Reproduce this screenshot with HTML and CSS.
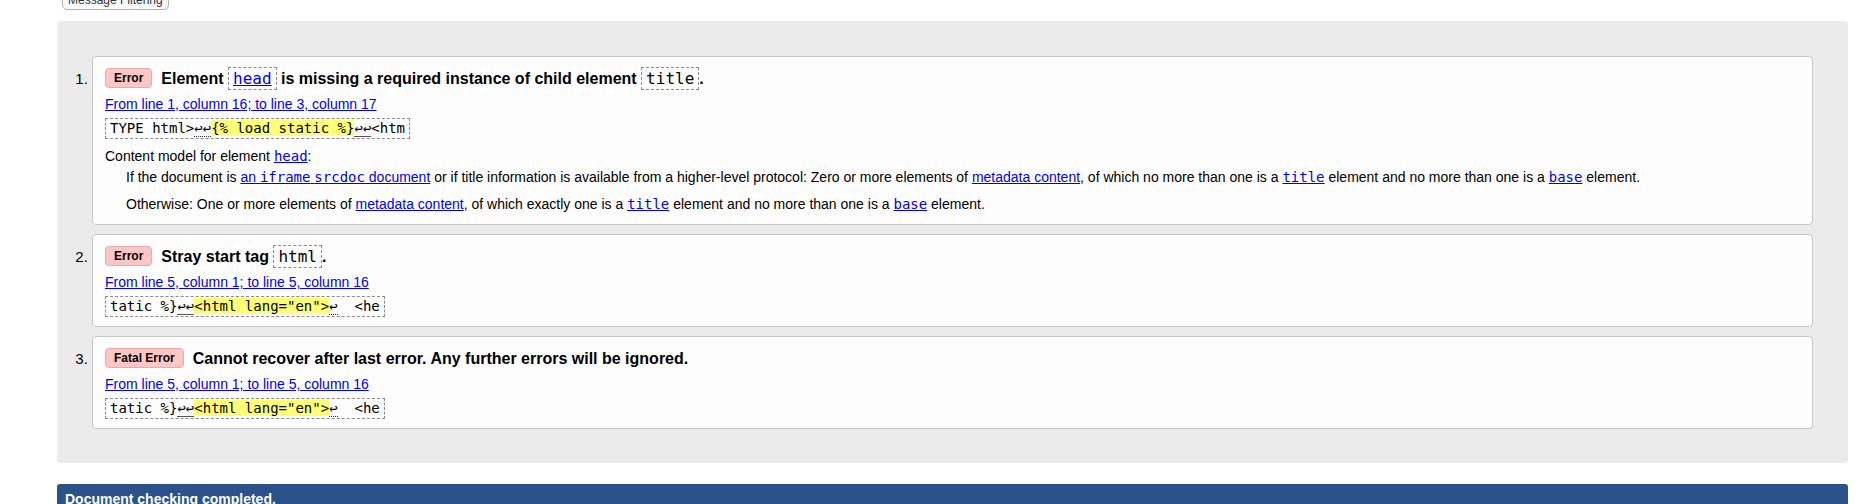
FILE: index.html
```html
<!DOCTYPE html>
<html lang="en">
<head>
<meta charset="utf-8">
<title>Validator results</title>
<link rel="stylesheet" href="styles.css">
</head>
<body>
<div class="page">
  <div class="filters">
    <button class="filter-btn" type="button">Message Filtering</button>
  </div>
  <div class="results">
    <ol class="messages">
      <li class="msg">
        <p class="title"><span class="badge">Error</span>Element <code class="ic"><a href="#">head</a></code> is missing a required instance of child element <code class="ic">title</code>.</p>
        <p class="loc"><a href="#">From line 1, column 16; to line 3, column 17</a></p>
        <p class="extract"><code class="ex">TYPE html&gt;<span class="lf dot">↩↩</span><mark>{% load static %}</mark><span class="lf sol">↩↩</span>&lt;htm</code></p>
        <p class="model">Content model for element <a href="#"><code>head</code></a>:</p>
        <p class="model-item">If the document is <a href="#">an <code>iframe</code> <code>srcdoc</code> document</a> or if title information is available from a higher-level protocol: Zero or more elements of <a href="#">metadata content</a>, of which no more than one is a <a href="#"><code>title</code></a> element and no more than one is a <a href="#"><code>base</code></a> element.</p>
        <p class="model-item second">Otherwise: One or more elements of <a href="#">metadata content</a>, of which exactly one is a <a href="#"><code>title</code></a> element and no more than one is a <a href="#"><code>base</code></a> element.</p>
      </li>
      <li class="msg">
        <p class="title"><span class="badge">Error</span>Stray start tag <code class="ic">html</code>.</p>
        <p class="loc"><a href="#">From line 5, column 1; to line 5, column 16</a></p>
        <p class="extract"><code class="ex">tatic %}<span class="lf sol">↩↩</span><mark>&lt;html lang="en"&gt;</mark><span class="lf dot">↩</span>  &lt;he</code></p>
      </li>
      <li class="msg">
        <p class="title"><span class="badge">Fatal Error</span>Cannot recover after last error. Any further errors will be ignored.</p>
        <p class="loc"><a href="#">From line 5, column 1; to line 5, column 16</a></p>
        <p class="extract"><code class="ex">tatic %}<span class="lf sol">↩↩</span><mark>&lt;html lang="en"&gt;</mark><span class="lf dot">↩</span>  &lt;he</code></p>
      </li>
    </ol>
  </div>
  <p class="success">Document checking completed.</p>
</div>
</body>
</html>
```
FILE: styles.css
```css
html, body {
  margin: 0;
  padding: 0;
  background: #ffffff;
}

body {
  font-family: "Liberation Sans", Arial, sans-serif;
  font-size: 14px;
  line-height: 18px;
  color: #000;
}

a {
  color: #0000ee;
  text-decoration: underline;
}

code {
  font-family: "DejaVu Sans Mono", "Liberation Mono", monospace;
  font-size: 14px;
  line-height: 1;
}

.page {
  margin-left: 57px;
  width: 1791px;
}

.filters {
  display: flow-root;
  padding-left: 5px;
  height: 10px;
}

.filter-btn {
  display: block;
  margin-top: -9px;
  height: 19px;
  padding: 0 5px;
  font-family: "Liberation Sans", Arial, sans-serif;
  font-size: 12px;
  line-height: 17px;
  color: #333;
  background: #fafafa;
  border: 1px solid #b5b5b5;
  border-radius: 5px;
}

.results {
  margin-top: 11px;
  background: #ebebeb;
  border-radius: 4px;
  padding: 35px 35px 34px 35px;
}

.messages {
  margin: 0;
  padding: 0;
  list-style: decimal;
}

.msg {
  background: #fdfdfd;
  border: 1px solid #c8c8c8;
  border-radius: 4px;
  padding: 10px 12px 9px 12px;
  margin-bottom: 9px;
  font-size: 14px;
}

.msg:last-child {
  margin-bottom: 0;
}

.msg::marker {
  font-size: 15px;
}

.msg p {
  margin: 0;
}

.title {
  font-size: 16px;
  font-weight: bold;
  line-height: 24px;
}

.badge {
  display: inline-block;
  font-size: 12px;
  line-height: 18px;
  padding: 0 8px;
  margin-right: 9px;
  background: #ffc6c6;
  border: 1px solid #eaa9a9;
  border-radius: 4px;
  vertical-align: 2px;
}

.ic {
  font-size: 16px;
  font-weight: normal;
  padding: 1px 4px;
  border: 1px dashed #8a8a8a;
}

.loc {
  margin-top: 4px !important;
  line-height: 18px;
}

.extract {
  margin-top: 5px !important;
  line-height: 19px;
}

.ex {
  display: inline-block;
  font-size: 14px;
  line-height: 19px;
  padding: 0 4px;
  border: 1px dashed #8a8a8a;
  white-space: pre;
}

mark {
  background: #ffff77;
  color: #000;
}

.lf {
  font-size: 14px;
}

.lf.dot {
  border-bottom: 1px dotted #333;
}

.lf.sol {
  border-bottom: 1px solid #555;
}

.model {
  margin-top: 8px !important;
}

.model-item {
  margin-top: 3px !important;
  margin-left: 21px !important;
}

.model-item.second {
  margin-top: 9px !important;
  margin-bottom: 2px !important;
}

.success {
  margin: 21px 0 0 0;
  background: #2b5389;
  color: #fff;
  font-weight: bold;
  font-size: 14px;
  line-height: 18px;
  padding: 6px 8px;
  border-radius: 3px 3px 0 0;
}
```
